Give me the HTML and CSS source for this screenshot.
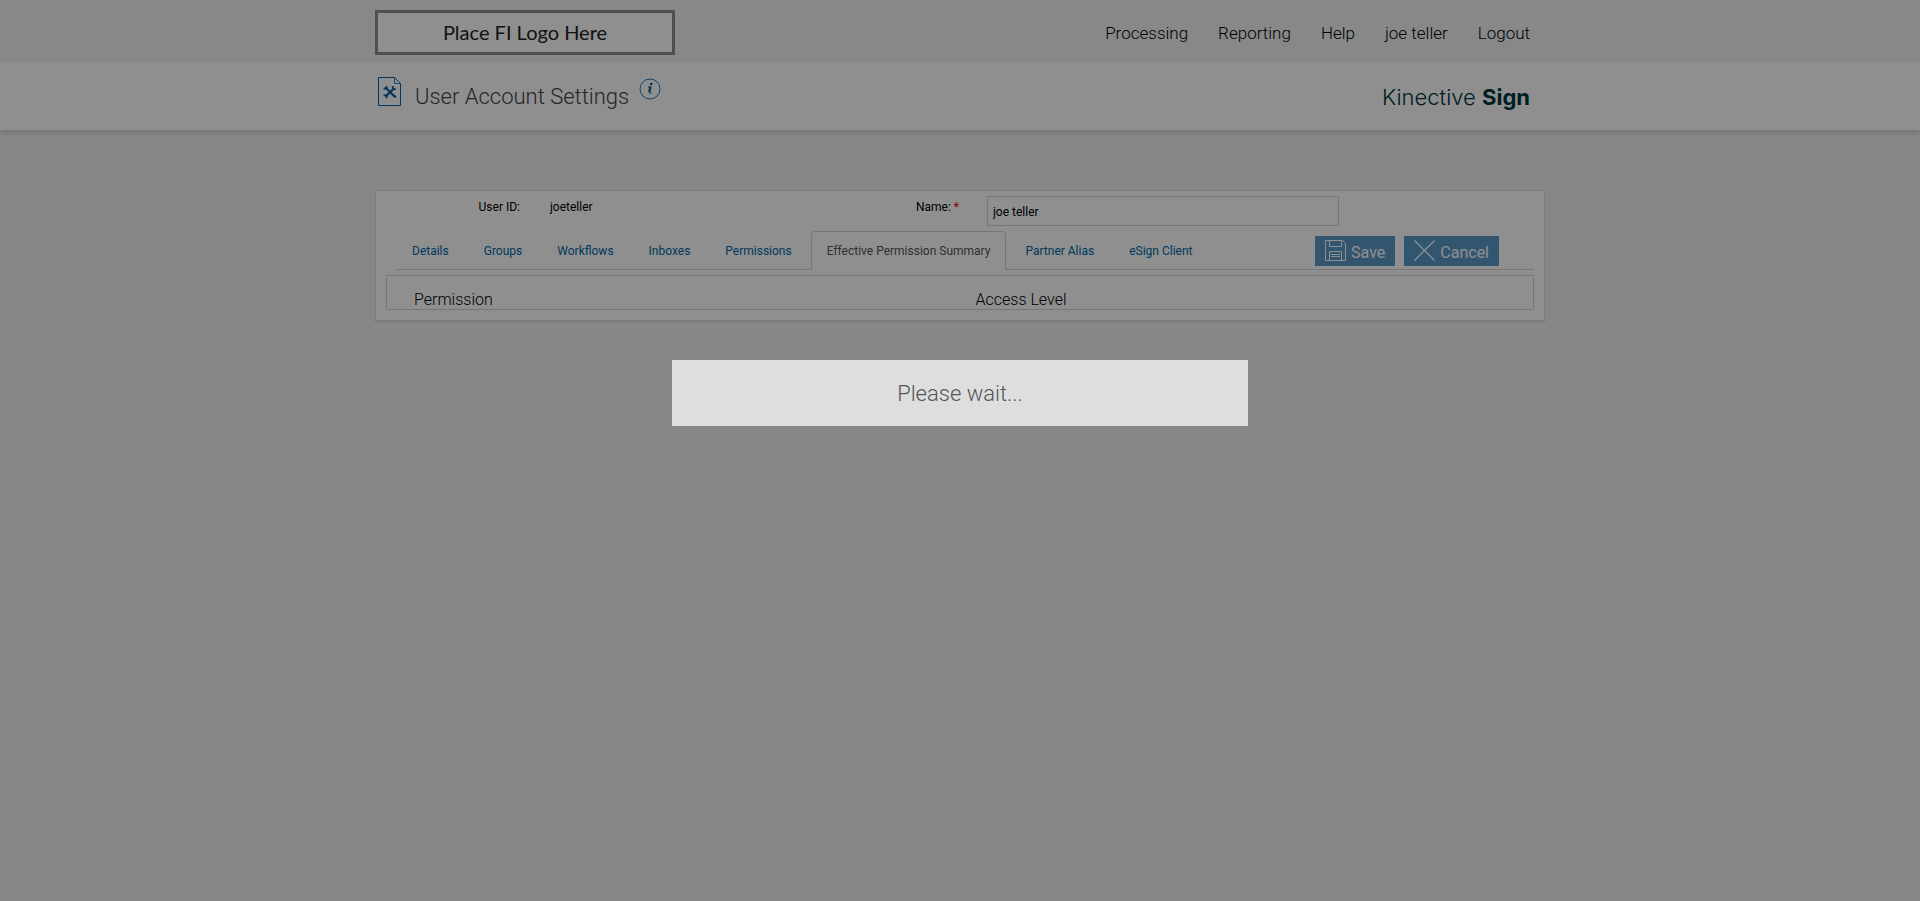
FILE: index.html
```html
<!DOCTYPE html>
<html lang="en">
<head>
    <meta charset="UTF-8">
    <meta name="viewport" content="width=device-width, initial-scale=1.0">
    <title>User Account Settings</title>
    <link rel="stylesheet" href="styles.css">
</head>
<body>
    <header class="top-bar">
        <div class="container top-inner">
            <div class="fi-logo">Place FI Logo Here</div>
            <nav class="main-nav">
                <a href="#">Processing</a>
                <a href="#">Reporting</a>
                <a href="#">Help</a>
                <a href="#">joe teller</a>
                <a href="#">Logout</a>
            </nav>
        </div>
    </header>

    <div class="title-bar">
        <div class="container title-inner">
            <svg class="page-icon" width="24" height="29" viewBox="0 0 24 29" fill="none" stroke="#0a63a5">
                <path d="M.5.5h16l6 6v22H.5z"/>
                <path d="M16.500.5v6h6" stroke="#2a8cc0"/>
                <path d="M8 11l9 9M16 11.500L7.500 19.500" stroke-width="2.200"/>
                <path d="M5.500 11.500h3v-2.500M14.800 9v3.200h3.200M5.500 18.300h3.200v3M16 18l2 2.500" stroke-width="1.800"/>
            </svg>
            <h1 class="page-title">User Account Settings</h1>
            <a href="#" class="info-link" aria-label="Information">
                <svg width="22" height="22" viewBox="0 0 22 22" fill="none" stroke="#2478b0">
                    <circle cx="11" cy="11" r="10"/>
                    <path d="M11.600 8.500L10.200 14.200" stroke="#0a5a94" stroke-width="2.200"/>
                    <path d="M9 9h2.500M10 15.200c1 .4 2 0 2.600-1" stroke="#0a5a94"/>
                    <circle cx="12.200" cy="6" r="1.300" fill="#0a5a94" stroke="none"/>
                </svg>
            </a>
            <div class="brand">Kinective <b>Sign</b></div>
        </div>
    </div>

    <main class="container panel">
        <form class="user-form">
            <div class="user-fields">
                <span class="field-label">User ID:</span>
                <span class="field-value">joeteller</span>
                <label class="field-label" for="name">Name: <span class="required">*</span></label>
                <input type="text" class="field-input" id="name" value="joe teller">
            </div>

            <div class="tab-row">
                <nav class="tabs">
                    <a href="#" class="tab">Details</a>
                    <a href="#" class="tab">Groups</a>
                    <a href="#" class="tab">Workflows</a>
                    <a href="#" class="tab">Inboxes</a>
                    <a href="#" class="tab">Permissions</a>
                    <a href="#" class="tab active">Effective Permission Summary</a>
                    <a href="#" class="tab">Partner Alias</a>
                    <a href="#" class="tab">eSign Client</a>
                </nav>
                <div class="actions">
                    <button type="button" class="btn">
                        <svg width="21" height="21" viewBox="0 0 21 21" fill="none" stroke="#fff">
                            <path d="M.5.5h17l3 3v17H.5z"/>
                            <path d="M4.500.5v6h12v-6M4.500 20.500v-9h12v9M6 14.500h9M6 16.500h9"/>
                        </svg>
                        <span>Save</span>
                    </button>
                    <button type="button" class="btn">
                        <svg width="21" height="21" viewBox="0 0 21 21" fill="none" stroke="#fff">
                            <path d="M.5.5l20 20M20.500.5l-20 20" stroke-width="1.300"/>
                        </svg>
                        <span>Cancel</span>
                    </button>
                </div>
            </div>
        </form>

        <div class="summary">
            <table class="summary-table">
                <thead>
                    <tr>
                        <th scope="col">Permission</th>
                        <th scope="col">Access Level</th>
                    </tr>
                </thead>
            </table>
        </div>
    </main>

    <div class="overlay"></div>
    <div class="wait-box" role="status">Please wait...</div>
</body>
</html>
```

FILE: styles.css
```css
* { box-sizing: border-box; }

body {
    margin: 0;
    min-height: 100vh;
    background: #f1f1f1;
    color: #000;
    font-family: Roboto, "Liberation Sans", sans-serif;
    font-size: 12px;
    line-height: 16px;
}

a {
    color: #0067a5;
    text-decoration: none;
}

.container {
    width: 100%;
    max-width: 1170px;
    margin: 0 auto;
}

/* header */
.top-bar {
    background: #f3f3f3;
}

.top-inner {
    display: flex;
    align-items: center;
    justify-content: space-between;
    height: 62px;
    padding: 4px 15px 0 0;
}

.fi-logo {
    width: 300px;
    margin-bottom: 2px;
    border: 3px solid #8f8f8f;
    background: #fff;
    color: #222;
    font-family: Lato, sans-serif;
    font-size: 20px;
    line-height: 39px;
    text-align: center;
}

.main-nav {
    display: flex;
    gap: 30px;
    font-size: 17px;
    font-weight: 300;
    line-height: 20px;
}

.main-nav a {
    color: #000;
}

.title-bar {
    background: #fff;
    box-shadow: 0 4px 4px rgba(0, 0, 0, 0.12);
}

.title-inner {
    display: flex;
    align-items: flex-start;
    height: 68px;
    padding: 15px 15px 0 3px;
}

.page-title {
    margin: 5px 10px 0 13px;
    color: #444;
    font-size: 22px;
    font-weight: 300;
    line-height: 30px;
}

.info-link {
    margin-top: 1px;
}

.brand {
    margin: 5px 0 0 auto;
    color: #00383f;
    font-family: Inter, sans-serif;
    font-size: 22px;
    font-weight: 300;
    line-height: 30px;
}

.brand b {
    font-weight: 700;
}

/* user panel */
.panel {
    margin-top: 60px;
    padding: 5px 0 10px;
    border: 1px solid #ddd;
    background: #fff;
    box-shadow: 0 1px 1px rgba(0, 0, 0, 0.1);
}

.user-fields {
    display: grid;
    grid-template-columns: 144fr 303fr 80fr 352fr 177fr;
    column-gap: 28px;
    margin-bottom: 5px;
}

.field-label {
    padding-top: 3px;
    text-align: right;
}

.field-value {
    padding: 3px 0 0 2px;
}

.required {
    color: #f00;
}

.field-input {
    height: 30px;
    padding: 2px 5px 0;
    border: 1px solid #d5d5d5;
    background: #fff;
    color: #000;
    font-family: inherit;
    font-size: 12px;
}

.tab-row {
    display: flex;
    justify-content: space-between;
    margin: 0 10px 5px 20px;
    border-bottom: 1px solid #d5d5d5;
}

.tabs {
    display: flex;
    gap: 3px;
    margin-bottom: -1px;
}

.tab {
    padding: 11px 15px;
    border: 1px solid transparent;
    border-bottom: 0;
    border-radius: 4px 4px 0 0;
    line-height: 16px;
}

.tab.active {
    border-color: #d5d5d5;
    background: #fff;
    color: #555;
}

.actions {
    display: flex;
    gap: 9px;
    align-items: center;
    margin-right: 35px;
    padding-top: 2px;
}

.btn {
    display: flex;
    align-items: flex-start;
    gap: 5px;
    height: 30px;
    padding: 4px 10px 0;
    border: 0;
    background: #5a99c8;
    color: #fff;
    font-family: inherit;
    font-size: 16px;
    line-height: 26px;
    cursor: pointer;
}

.summary {
    margin: 0 10px;
    padding: 15px 0 0;
    border: 1px solid #d5d5d5;
}

.summary-table {
    width: 100%;
    border-collapse: collapse;
    table-layout: fixed;
}

.summary-table th {
    padding: 0 0 0 27px;
    font-size: 16px;
    font-weight: 300;
    line-height: 18px;
    text-align: left;
}

.summary-table th:first-child {
    width: 49%;
}

/* blocking message */
.overlay {
    position: fixed;
    inset: 0;
    background: rgba(0, 0, 0, 0.44);
}

.wait-box {
    position: fixed;
    top: 40%;
    left: 35%;
    width: 30%;
    padding: 19px 0 17px;
    background: #dedede;
    color: #555;
    font-size: 22px;
    font-weight: 300;
    line-height: 30px;
    text-align: center;
}
```
